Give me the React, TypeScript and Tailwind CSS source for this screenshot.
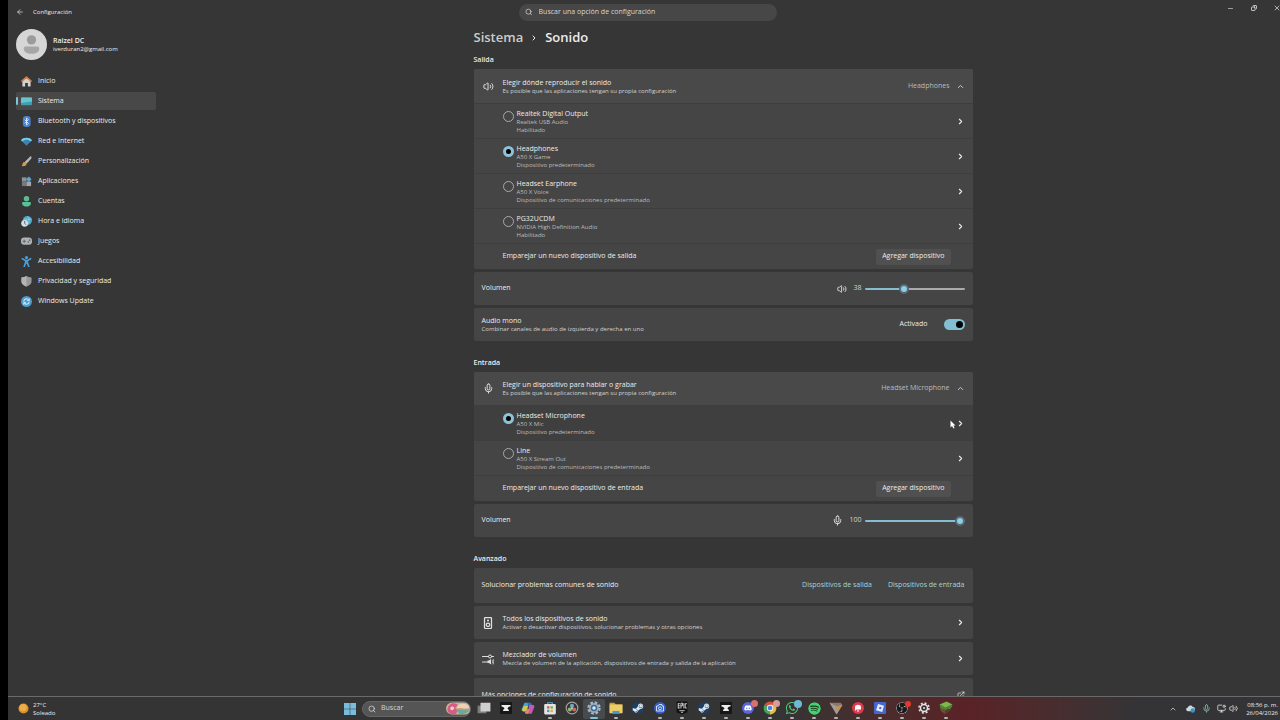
import React, { useState } from "react";
import { ArrowLeft, ChevronRight, ChevronUp, ExternalLink, Mic, Minus, Search, Volume2, X, Copy, MonitorDot } from "lucide-react";
import { FaDiscord, FaSpotify, FaSteamSymbol, FaWhatsapp } from "react-icons/fa";
import { SiObsstudio } from "react-icons/si";

interface NavItem {
  label: string;
  icon: React.ReactNode;
  active?: boolean;
}

interface Device {
  name: string;
  detail: string;
  status: string;
}

interface TaskApp {
  name: string;
  icon: React.ReactNode;
  running?: boolean;
  active?: boolean;
}

const Svg = ({ children, size = "size-[11px]" }: { children: React.ReactNode; size?: string }) => (
  <svg viewBox="0 0 24 24" className={`${size} shrink-0`} fill="none" aria-hidden="true">
    {children}
  </svg>
);

const navItems: NavItem[] = [
  {
    label: "Inicio",
    icon: (
      <Svg>
        <path d="M3 9v14h6v-8h6v8h6V9l-9-7z" fill="#d3d0cd" />
        <path d="M2 11 12 2.500 22 11" stroke="#c98352" strokeWidth="3.500" strokeLinecap="round" strokeLinejoin="round" />
      </Svg>
    ),
  },
  {
    label: "Sistema",
    active: true,
    icon: (
      <Svg>
        <rect x="0" y="3" width="24" height="17" rx="2" fill="#3f9fae" />
        <path d="M0 5a2 2 0 0 1 2-2h20a2 2 0 0 1 2 2v7L0 15z" fill="#67c4cd" />
      </Svg>
    ),
  },
  {
    label: "Bluetooth y dispositivos",
    icon: (
      <Svg>
        <rect x="4" y="0" width="17" height="24" rx="7" fill="#4a80cc" />
        <path d="m8 8 8 8-4 4V4l4 4-8 8" stroke="#dceafa" strokeWidth="2" strokeLinejoin="round" />
      </Svg>
    ),
  },
  {
    label: "Red e Internet",
    icon: (
      <Svg>
        <path d="M0 9C6 2 18 2 24 9L12 21z" fill="#3a82b8" />
        <path d="M0 9C6 2 18 2 24 9l-3 3C16 7 8 7 3 12z" fill="#72cfe4" />
      </Svg>
    ),
  },
  {
    label: "Personalización",
    icon: (
      <Svg>
        <path d="M22 1c2 1 1 3 0 5L12 17l-4-4L19 2c1-1 2-2 3-1z" fill="#b9b9b9" />
        <path d="M8 13c-4 0-4 3-5 6-.500 2-2 3-2 3 5 1 11 0 11-5z" fill="#d99a4a" />
      </Svg>
    ),
  },
  {
    label: "Aplicaciones",
    icon: (
      <Svg>
        <path d="M2 3h10v9H2z" fill="#8d9297" />
        <path d="M2 12h10v10H2z" fill="#737a82" />
        <path d="M12 12h10v10H12z" fill="#a2a7ac" />
        <path d="m17 1 6 6-6 6-6-6z" fill="#58a8d6" />
      </Svg>
    ),
  },
  {
    label: "Cuentas",
    icon: (
      <Svg>
        <circle cx="12" cy="6" r="6" fill="#63b894" />
        <path d="M4 13h16c3 0 3 10-8 10S1 13 4 13z" fill="#58c09a" />
      </Svg>
    ),
  },
  {
    label: "Hora e idioma",
    icon: (
      <Svg>
        <circle cx="14" cy="10" r="10" fill="#4fa8c8" />
        <path d="M14 1c5 5 5 12 0 18M6 7h17" stroke="#86d3e2" strokeWidth="2" />
        <circle cx="8" cy="16" r="7.500" fill="#d5dde0" />
        <path d="M8 11v5l3 3" stroke="#51626b" strokeWidth="2" />
      </Svg>
    ),
  },
  {
    label: "Juegos",
    icon: (
      <Svg>
        <rect x="0" y="3" width="24" height="16" rx="7" fill="#aeb2b5" />
        <path d="M7 8v7M3.500 11.500h7" stroke="#5c6063" strokeWidth="2" />
        <circle cx="16" cy="13" r="1.800" fill="#5c6063" />
        <circle cx="19" cy="9" r="1.800" fill="#5c6063" />
      </Svg>
    ),
  },
  {
    label: "Accesibilidad",
    icon: (
      <Svg>
        <circle cx="12" cy="3.500" r="3.500" fill="#4b9fd2" />
        <path d="m3 6 7 4v5l-3 8M21 6l-7 4v5l3 8M10 10h4v5h-4z" stroke="#4b9fd2" strokeWidth="3.500" strokeLinecap="round" strokeLinejoin="round" />
      </Svg>
    ),
  },
  {
    label: "Privacidad y seguridad",
    icon: (
      <Svg>
        <path d="M12 0c3 2 6 3 11 3v9c0 6-6 9-11 11C7 21 1 18 1 12V3c5 0 8-1 11-3z" fill="#979899" />
        <path d="M12 0v23C7 21 1 18 1 12V3c5 0 8-1 11-3z" fill="#b3b4b5" />
      </Svg>
    ),
  },
  {
    label: "Windows Update",
    icon: (
      <Svg>
        <circle cx="12" cy="12" r="12" fill="#4f9bc9" />
        <path d="M6 11c1-5 8-7 11-2M18 13c-1 5-8 7-11 2" stroke="#c7e6f5" strokeWidth="2.500" strokeLinecap="round" />
        <path d="M18 5v5h-5M6 19v-5h5" stroke="#c7e6f5" strokeWidth="2" />
      </Svg>
    ),
  },
];

const outputs: Device[] = [
  { name: "Realtek Digital Output", detail: "Realtek USB Audio", status: "Habilitado" },
  { name: "Headphones", detail: "A50 X Game", status: "Dispositivo predeterminado" },
  { name: "Headset Earphone", detail: "A50 X Voice", status: "Dispositivo de comunicaciones predeterminado" },
  { name: "PG32UCDM", detail: "NVIDIA High Definition Audio", status: "Habilitado" },
];

const inputs: Device[] = [
  { name: "Headset Microphone", detail: "A50 X Mic", status: "Dispositivo predeterminado" },
  { name: "Line", detail: "A50 X Stream Out", status: "Dispositivo de comunicaciones predeterminado" },
];

const Anvil = () => (
  <Svg size="size-3">
    <rect width="24" height="24" fill="#171717" />
    <path d="M3 6h18v3c-3 0-5 1-6 4 1 2 3 2 3 5H6c0-3 2-3 3-5-1-2-3-4-6-4z" fill="#ececec" />
  </Svg>
);

const Steam = () => (
  <span className="flex size-3 items-center justify-center rounded-full bg-[#1d3f63] text-[#dfe8ef]">
    <FaSteamSymbol className="size-3" />
  </span>
);

const taskApps: TaskApp[] = [
  {
    name: "Vista de tareas",
    icon: (
      <Svg size="size-3.5">
        <rect x="1" y="8" width="15" height="13" fill="#7d7d7d" />
        <rect x="6" y="3" width="17" height="15" fill="#cfcfcf" />
      </Svg>
    ),
  },
  { name: "Anvil", icon: <Anvil /> },
  {
    name: "Copilot",
    icon: (
      <Svg size="size-3.5">
        <path d="M6 3h8l-4 14H3c-2 0-2-2-2-3z" fill="#3fa6d8" />
        <path d="M5 8 2 15c-.500 2 1 3 3 3h4l3-9z" fill="#d4c64f" />
        <path d="M11 3h5c2 0 2 2 3 4h-7z" fill="#3369c8" />
        <path d="M14 7h7c2 0 2 2 1.500 4L19 20c-1 2-3 2-4 2h-4z" fill="#c55bb0" />
        <path d="m10 14 5 0-3 8H9c-2 0-2-2-3-4h3z" fill="#e58a66" />
      </Svg>
    ),
  },
  {
    name: "Microsoft Store",
    running: true,
    icon: (
      <Svg size="size-3.5">
        <path d="M8 6V3h8v3" stroke="#4ea3d6" strokeWidth="2" />
        <rect x="2" y="5" width="20" height="18" rx="2" fill="#e3e3e3" />
        <path d="M7 9h4v4H7z" fill="#d9583f" />
        <path d="M13 9h4v4h-4z" fill="#72ad48" />
        <path d="M7 15h4v4H7z" fill="#3e99d0" />
        <path d="M13 15h4v4h-4z" fill="#e0ad3a" />
      </Svg>
    ),
  },
  {
    name: "DaVinci Resolve",
    icon: (
      <Svg size="size-3.5">
        <circle cx="12" cy="12" r="10" fill="#333" stroke="#a3a3a3" strokeWidth="2" />
        <circle cx="12" cy="8" r="3.500" fill="#79a8c4" />
        <circle cx="8.300" cy="14.500" r="3.500" fill="#92b76e" />
        <circle cx="15.700" cy="14.500" r="3.500" fill="#c96868" />
        <circle cx="12" cy="12" r="1.500" fill="#eee" />
      </Svg>
    ),
  },
  {
    name: "Configuración",
    active: true,
    icon: (
      <Svg size="size-3.5">
        <circle cx="12" cy="12" r="9.500" stroke="#a9bac6" strokeWidth="4" strokeDasharray="4.500 2.960" />
        <circle cx="12" cy="12" r="8.500" fill="#9aabb8" />
        <circle cx="12" cy="12" r="5.500" fill="#386c9e" />
        <circle cx="12" cy="12" r="3" fill="#dce8ef" />
      </Svg>
    ),
  },
  {
    name: "Explorador de archivos",
    running: true,
    icon: (
      <Svg size="size-3.5">
        <path d="M1 3h8l3 3h11v14H1z" fill="#d29b32" />
        <path d="M1 6h22v15H1z" fill="#ecce68" />
        <path d="M6 17h12v5H6z" fill="#4799cf" />
      </Svg>
    ),
  },
  { name: "Steam", icon: <Steam /> },
  {
    name: "Cámara",
    running: true,
    icon: (
      <Svg size="size-3">
        <circle cx="12" cy="12" r="12" fill="#315fc8" />
        <path d="M5 8h3l2-3h6v3h3v10H5z" stroke="#dce7ff" strokeWidth="1.800" />
        <circle cx="12" cy="12.500" r="3" stroke="#dce7ff" strokeWidth="1.800" />
      </Svg>
    ),
  },
  {
    name: "Epic Games",
    running: true,
    icon: (
      <svg viewBox="0 0 24 26" className="size-3.5" aria-hidden="true">
        <path d="M2 1h20v20l-10 4-10-4z" fill="#101010" />
        <path d="M5 5h3M5 9h3M5 13h3M5 4v10M10 14V4h3v5h-3M15.500 4v10M21 5h-3v8h3" stroke="#e6e6e6" strokeWidth="1.600" fill="none" />
        <path d="M7 18h10M10 21h4" stroke="#ddd" strokeWidth="1.600" />
      </svg>
    ),
  },
  { name: "Steam", running: true, icon: <Steam /> },
  { name: "Anvil", running: true, icon: <Anvil /> },
  {
    name: "Discord",
    running: true,
    icon: (
      <span className="relative flex size-3 items-center justify-center rounded-full bg-[#5965d8] text-white">
        <FaDiscord className="size-2" />
        <i className="absolute -top-[2px] -right-1 size-[7px] rounded-full bg-[#d97070]" />
      </span>
    ),
  },
  {
    name: "Chrome",
    running: true,
    icon: (
      <span className="relative">
        <Svg size="size-3.5">
          <path d="M12 12 2.500 6.500A11 11 0 0 1 21.500 6.500z" fill="#d64f43" />
          <path d="M12 12V23A11 11 0 0 0 21.500 6.500H12z" fill="#e6c03d" />
          <path d="m12 12 0 11A11 11 0 0 1 2.500 6.500z" fill="#48a35d" />
          <circle cx="12" cy="12" r="5.500" fill="#eee" />
          <circle cx="12" cy="12" r="4" fill="#4785d6" />
        </Svg>
        <i className="absolute -top-px -right-[3px] size-[7px] rounded-full bg-[#d99a9a]" />
      </span>
    ),
  },
  {
    name: "WhatsApp",
    running: true,
    icon: (
      <span className="relative text-[#51c878]">
        <FaWhatsapp className="size-3.5" />
        <i className="absolute -top-px -right-[3px] size-2 rounded-full bg-[#6bbad8]" />
      </span>
    ),
  },
  { name: "Spotify", running: true, icon: <FaSpotify className="size-[13px] rounded-full bg-[#163b22] text-[#4ccf70]" /> },
  {
    name: "Prism",
    running: true,
    icon: (
      <Svg size="size-3.5">
        <path d="M1 3h19l3 4-10 16z" fill="#857a72" />
        <path d="m1 3 12 6 10-2-10 16z" fill="#a59b93" />
        <path d="m13 10 9-3-8 12z" fill="#d98a3a" />
      </Svg>
    ),
  },
  {
    name: "Gamebar",
    running: true,
    icon: (
      <Svg size="size-3">
        <circle cx="12" cy="12" r="12" fill="#dd3b4b" />
        <path d="M6 10c0-6 12-6 12 0v5H9l-3 3z" fill="#fff" />
        <path d="M12 15v5" stroke="#fff" strokeWidth="2" />
      </Svg>
    ),
  },
  {
    name: "Roblox",
    running: true,
    icon: (
      <Svg size="size-3">
        <rect width="24" height="24" rx="2" fill="#4666cf" />
        <path d="m8 4 12 3.500L16.500 20 4 16.500z" fill="#e4eaff" />
        <path d="m11 9.500 4 1-1 4-4-1z" fill="#4666cf" />
      </Svg>
    ),
  },
  {
    name: "OBS Studio",
    running: true,
    icon: (
      <span className="relative">
        <SiObsstudio className="size-3 rounded-full bg-[#191919] text-[#d7d7d7]" />
        <i className="absolute -top-px -right-[3px] size-1.5 rounded-full bg-[#e03a2e]" />
      </span>
    ),
  },
  {
    name: "SteelSeries",
    running: true,
    icon: (
      <Svg size="size-3">
        <circle cx="12" cy="12" r="10" stroke="#e0e0e0" strokeWidth="3" strokeDasharray="4 3.850" />
        <circle cx="12" cy="12" r="7" fill="#3f2c2c" stroke="#e6e6e6" strokeWidth="3" />
        <circle cx="12" cy="12" r="2" fill="#e6e6e6" />
      </Svg>
    ),
  },
  {
    name: "Minecraft",
    running: true,
    icon: (
      <Svg size="size-3.5">
        <path d="m1 6 12-5 10 5-12 6z" fill="#7db84c" />
        <path d="m1 6 10 6v11L3 17z" fill="#6f4d38" />
        <path d="m23 6-12 6v11l9-7z" fill="#593d2d" />
        <path d="m1 6 10 6v4l-3-3-3 1-3-4zM23 6l-12 6v4l4-3 3 1 4-4z" fill="#4d8a38" />
      </Svg>
    ),
  },
];

const SectionTitle = ({ children }: { children: React.ReactNode }) => (
  <h2 className="mb-px flex h-4 items-center text-[7px] font-semibold">{children}</h2>
);

const Card = ({ children, className = "" }: { children: React.ReactNode; className?: string }) => (
  <div className={`rounded-xs bg-[#454545] ${className}`}>{children}</div>
);

const Labels = ({ title, text }: { title: string; text?: string }) => (
  <div className="min-w-0 flex-1">
    <p className="text-[7px] leading-[9px]">{title}</p>
    {text && <p className="text-[6px] leading-[8px] text-[#d2d2d2]">{text}</p>}
  </div>
);

const DeviceRow = ({ device, group, checked, hovered, onSelect }: { device: Device; group: string; checked: boolean; hovered?: boolean; onSelect: () => void }) => (
  <div className={`relative flex min-h-[35px] border-t border-[#3e3e3e] pr-2 pl-[29px] ${hovered ? "bg-[#3f3f3f]" : ""}`}>
    <label className="flex flex-1 items-start gap-[3px] pt-[5px]">
      <input
        type="radio"
        name={group}
        checked={checked}
        onChange={onSelect}
        className="mt-[2px] size-[11px] shrink-0 appearance-none rounded-full border border-[#a8a8a8] checked:border-[3px] checked:border-[#8cc3d8] checked:bg-black"
      />
      <span className="flex flex-col">
        <span className="text-[7px] leading-[9px]">{device.name}</span>
        <span className="text-[6px] leading-[8px] text-[#bcbcbc]">{device.detail}</span>
        <span className="text-[6px] leading-[8px] text-[#bcbcbc]">{device.status}</span>
      </span>
    </label>
    <button aria-label={device.name}>
      <ChevronRight className="size-[9px]" strokeWidth={3} />
    </button>
    {hovered && (
      <svg viewBox="0 0 12 18" className="absolute top-[14px] right-[17px] h-[9px] w-[6px]" aria-hidden="true">
        <path d="M1 1v14l3-3 3 5 2-1-2-5h4z" fill="#fff" />
      </svg>
    )}
  </div>
);

const AddRow = ({ text }: { text: string }) => (
  <div className="flex min-h-[26px] items-center justify-between border-t border-[#3e3e3e] pr-[22px] pl-[29px]">
    <p className="text-[7px]">{text}</p>
    <button className="h-4 rounded-xs bg-[#505050] px-[6px] text-[7px]">Agregar dispositivo</button>
  </div>
);

const VolumeRow = ({ id, initial, icon }: { id: string; initial: number; icon: React.ReactNode }) => {
  const [value, setValue] = useState(initial);

  return (
    <Card className="mt-[3px] flex min-h-[33px] items-center px-2">
      <label htmlFor={id} className="flex-1 text-[7px]">Volumen</label>
      {icon}
      <span className="mr-[3px] ml-[6px] text-[7px] text-[#d2d2d2]">{value}</span>
      <input
        id={id}
        type="range"
        value={value}
        onChange={(e) => setValue(Number(e.target.value))}
        className="h-[2px] w-[100px] appearance-none rounded-full [&::-webkit-slider-thumb]:size-[10px] [&::-webkit-slider-thumb]:appearance-none [&::-webkit-slider-thumb]:rounded-full [&::-webkit-slider-thumb]:border-2 [&::-webkit-slider-thumb]:border-[#566a75] [&::-webkit-slider-thumb]:bg-[#93cbe2]"
        style={{ background: `linear-gradient(to right, #85bdd1 ${value}%, #aaaaaa ${value}%)` }}
      />
    </Card>
  );
};

const Header = ({ icon, title, current, className }: { icon: React.ReactNode; title: string; current: string; className: string }) => (
  <div className={`flex items-center rounded-t-xs bg-[#494949] px-2 ${className}`}>
    <span className="mr-2 flex w-[13px] justify-center">{icon}</span>
    <Labels title={title} text="Es posible que las aplicaciones tengan su propia configuración" />
    <span className="mr-[6px] text-[7px] text-[#bcbcbc]">{current}</span>
    <button aria-label={title}>
      <ChevronUp className="size-[9px]" strokeWidth={2} />
    </button>
  </div>
);

const LinkRow = ({ icon, title, text }: { icon: React.ReactNode; title: string; text: string }) => (
  <Card className="mt-[3px] flex min-h-[33px] items-center px-2">
    <span className="mr-2 flex w-[13px] justify-center">{icon}</span>
    <Labels title={title} text={text} />
    <button aria-label={title}>
      <ChevronRight className="size-[9px]" strokeWidth={3} />
    </button>
  </Card>
);

const App = () => {
  const [output, setOutput] = useState("Headphones");
  const [input, setInput] = useState("Headset Microphone");
  const [mono, setMono] = useState(true);

  return (
    <div className="h-screen overflow-hidden bg-black pl-2 font-['Open_Sans','Noto_Sans',sans-serif] text-[#ececec]">
      <div className="-mr-2 flex h-full flex-col bg-[#363636]">
        {/* Title bar */}
        <header className="grid h-6 shrink-0 grid-cols-[1fr_258px_1fr] items-center">
          <div className="flex items-center gap-[9px] pl-2">
            <button aria-label="Atrás">
              <ArrowLeft className="size-2" />
            </button>
            <span className="text-[6px]">Configuración</span>
          </div>
          <label className="flex h-[17px] items-center gap-[6px] rounded-full bg-[#474747] px-[6px]">
            <Search className="size-2" />
            <input
              type="text"
              aria-label="Buscar"
              placeholder="Buscar una opción de configuración"
              className="w-full bg-transparent text-[7px] outline-none placeholder:text-[#d6d6d6]"
            />
          </label>
          <div className="flex h-4 self-start justify-self-end">
            <button aria-label="Minimizar" className="flex w-[23px] items-center justify-center"><Minus className="size-[7px]" /></button>
            <button aria-label="Restaurar" className="flex w-[23px] items-center justify-center"><Copy className="size-[6px] -scale-x-100" strokeWidth={3} /></button>
            <button aria-label="Cerrar" className="flex w-[23px] items-center justify-center"><X className="size-2" /></button>
          </div>
        </header>

        <div className="flex min-h-0 flex-1">
          {/* Sidebar */}
          <aside className="w-[148px] shrink-0 pt-[5px] pl-2">
            <div className="flex items-center gap-[6px]">
              <svg viewBox="0 0 30 30" className="size-[31px]" aria-hidden="true">
                <circle cx="15" cy="15" r="15" fill="#d6d6d6" />
                <circle cx="15" cy="10.500" r="4.500" fill="#9b9b9b" />
                <path d="M9.500 17h11c1.500 0 2 1 2 2 0 3-3 5-7.500 5s-7.500-2-7.500-5c0-1 .500-2 2-2z" fill="#a6a6a6" />
              </svg>
              <div>
                <p className="text-[7px] leading-[9px] font-semibold">Raizel DC</p>
                <p className="text-[6px] leading-[8px]">iverduran2@gmail.com</p>
              </div>
            </div>
            <nav className="mt-3 flex flex-col gap-[2px]">
              {navItems.map((item) => (
                <a
                  key={item.label}
                  href="#"
                  className={`relative flex h-[18px] items-center gap-[6px] rounded-xs pl-[5px] text-[7px] ${item.active ? "bg-[#484848]" : ""}`}
                >
                  {item.active && <span className="absolute left-0 h-2 w-[2px] rounded-full bg-[#7fc4d8]" />}
                  {item.icon}
                  {item.label}
                </a>
              ))}
            </nav>
          </aside>

          {/* Sound settings */}
          <main className="min-w-0 flex-1 overflow-hidden pt-[2px] pl-[2px]">
            <div className="mx-auto max-w-[499px]">
              <h1 className="mb-[2px] flex h-6 items-center gap-[7px] text-[13px] font-semibold">
                <a href="#" className="text-[#cccccc]">Sistema</a>
                <ChevronRight className="size-2" strokeWidth={3} />
                Sonido
              </h1>

              <section>
                <SectionTitle>Salida</SectionTitle>
                <Card>
                  <Header
                    icon={<Volume2 className="size-[11px]" />}
                    title="Elegir dónde reproducir el sonido"
                    current={output}
                    className="min-h-[34px]"
                  />
                  {outputs.map((device) => (
                    <DeviceRow key={device.name} device={device} group="output" checked={output === device.name} onSelect={() => setOutput(device.name)} />
                  ))}
                  <AddRow text="Emparejar un nuevo dispositivo de salida" />
                </Card>
                <VolumeRow id="output-volume" initial={38} icon={<Volume2 className="size-[10px]" />} />
                <Card className="mt-[3px] flex min-h-[33px] items-center px-2">
                  <Labels title="Audio mono" text="Combinar canales de audio de izquierda y derecha en uno" />
                  <label htmlFor="mono" className="mr-4 text-[7px]">{mono ? "Activado" : "Desactivado"}</label>
                  <input
                    id="mono"
                    type="checkbox"
                    role="switch"
                    checked={mono}
                    onChange={() => setMono(!mono)}
                    className="flex h-[11px] w-[21px] appearance-none items-center rounded-full bg-[#6b6b6b] px-[2px] before:size-[7px] before:rounded-full before:bg-black checked:justify-end checked:bg-[#82bfd2]"
                  />
                </Card>
              </section>

              <section className="mt-[14px]">
                <SectionTitle>Entrada</SectionTitle>
                <Card>
                  <Header
                    icon={<Mic className="size-[11px]" />}
                    title="Elegir un dispositivo para hablar o grabar"
                    current={input}
                    className="min-h-[33px]"
                  />
                  {inputs.map((device, index) => (
                    <DeviceRow key={device.name} device={device} group="input" hovered={index === 0} checked={input === device.name} onSelect={() => setInput(device.name)} />
                  ))}
                  <AddRow text="Emparejar un nuevo dispositivo de entrada" />
                </Card>
                <VolumeRow id="input-volume" initial={100} icon={<Mic className="size-[11px]" />} />
              </section>

              <section className="mt-[14px]">
                <SectionTitle>Avanzado</SectionTitle>
                <Card className="flex min-h-[35px] items-center gap-4 px-2 text-[7px]">
                  <p className="flex-1">Solucionar problemas comunes de sonido</p>
                  <a href="#" className="text-[#a3d5da]">Dispositivos de salida</a>
                  <a href="#" className="text-[#a3d5da]">Dispositivos de entrada</a>
                </Card>
                <LinkRow
                  icon={
                    <Svg size="size-3">
                      <rect x="5" y="1" width="14" height="22" rx="2" stroke="#e0e0e0" strokeWidth="2.500" />
                      <circle cx="12" cy="15.500" r="3.500" stroke="#e0e0e0" strokeWidth="2.500" />
                      <circle cx="12" cy="7" r="2" fill="#e0e0e0" />
                    </Svg>
                  }
                  title="Todos los dispositivos de sonido"
                  text="Activar o desactivar dispositivos, solucionar problemas y otras opciones"
                />
                <LinkRow
                  icon={
                    <Svg size="size-3">
                      <path d="M1 7h12M19 7h4M1 18h10" stroke="#e0e0e0" strokeWidth="2" strokeLinecap="round" />
                      <circle cx="16" cy="7" r="3" stroke="#e0e0e0" strokeWidth="2" />
                      <path d="M11 15h3l4-3v11l-4-3h-3z" fill="#e0e0e0" />
                      <path d="M20 14c2 2 2 5 0 7M22 12c2 3 2 8 0 11" stroke="#e0e0e0" strokeWidth="1.500" />
                    </Svg>
                  }
                  title="Mezclador de volumen"
                  text="Mezcla de volumen de la aplicación, dispositivos de entrada y salida de la aplicación"
                />
                <Card className="mt-[3px] flex min-h-[33px] items-center px-2">
                  <Labels title="Más opciones de configuración de sonido" />
                  <button aria-label="Más opciones de configuración de sonido">
                    <ExternalLink className="size-2" />
                  </button>
                </Card>
              </section>
            </div>
          </main>
        </div>

        {/* Taskbar */}
        <footer className="grid h-6 shrink-0 grid-cols-[1fr_auto_1fr] items-center border-t border-[#6a6a6a] bg-linear-to-r from-[#343434] from-60% via-[#5a2226] via-75% to-[#343436] to-88%">
          <div className="flex items-center gap-1 pl-[10px]">
            <svg viewBox="0 0 24 24" className="size-[11px]" aria-hidden="true">
              <circle cx="12" cy="12" r="11" fill="#dc8f2c" />
              <circle cx="11" cy="10" r="8" fill="#ecae45" />
            </svg>
            <p className="text-[6px] leading-[8px]">27°C<br />Soleado</p>
          </div>

          <div className="flex h-full items-center">
            <button aria-label="Inicio" className="flex w-[22px] justify-center">
              <Svg size="size-3">
                <path d="M0 0h11.500v11.500H0zM12.500 0H24v11.500H12.500zM0 12.500h11.500V24H0zM12.500 12.500H24V24H12.500z" fill="#79bddd" />
              </Svg>
            </button>
            <label className="mr-[2px] ml-px flex h-4 w-[109px] items-center gap-[5px] overflow-hidden rounded-full border border-[#666666] bg-[#555555] pl-[5px]">
              <Search className="size-2 shrink-0" />
              <input type="text" placeholder="Buscar" aria-label="Buscar en Windows" className="w-[60px] bg-transparent text-[7px] outline-none placeholder:text-[#d6d6d6]" />
              <svg viewBox="0 0 50 26" className="ml-auto h-[13px] w-[25px] shrink-0" aria-hidden="true">
                <rect y="1" width="50" height="24" rx="12" fill="#ceb39c" />
                <path d="M3 14C5 2 16 0 24 6l-6 6 6 4-4 8C10 26 2 22 3 14z" fill="#d65d82" />
                <path d="M8 13c3-6 9-4 8 0s-6 5-8 0z" fill="#f2c8cf" />
                <path d="M24 6c9-5 20-3 23 5l-13 3-12-2z" fill="#e9d3b5" />
                <path d="M20 16c8-6 20 2 27-2-2 8-9 11-20 10z" fill="#69aaa0" />
                <path d="M24 15c6-3 12 2 20 0" stroke="#e58c61" strokeWidth="3" fill="none" />
              </svg>
            </label>
            {taskApps.map((app, index) => (
              <button
                key={index}
                aria-label={app.name}
                className={`relative flex h-5 w-[22px] items-center justify-center rounded-xs pb-px ${app.active ? "bg-[#474b4e]" : ""}`}
              >
                {app.icon}
                {app.running && <span className="absolute bottom-0 h-[2px] w-1 rounded-full bg-[#b5b5b5]" />}
                {app.active && <span className="absolute bottom-0 h-[2px] w-2 rounded-full bg-[#7fc4d8]" />}
              </button>
            ))}
          </div>

          <div className="flex items-center justify-end pr-[10px]">
            <ChevronUp className="mr-[9px] size-2" />
            <Svg size="mr-[7px] size-[9px]">
              <path d="M6 19a5 5 0 0 1-1-10 7 7 0 0 1 13-1 5 5 0 0 1 1 11z" fill="#cfd8df" />
              <circle cx="18" cy="17" r="6" fill="#3f8fd0" />
            </Svg>
            <Mic className="mr-[6px] size-[9px] text-[#8ac7b4]" />
            <MonitorDot className="mr-[3px] size-[9px]" />
            <Volume2 className="mr-2 size-[9px]" />
            <p className="text-right text-[6px] leading-[8px]">08:56 p. m.<br />26/04/2026</p>
          </div>
        </footer>
      </div>
    </div>
  );
};

export default App;
